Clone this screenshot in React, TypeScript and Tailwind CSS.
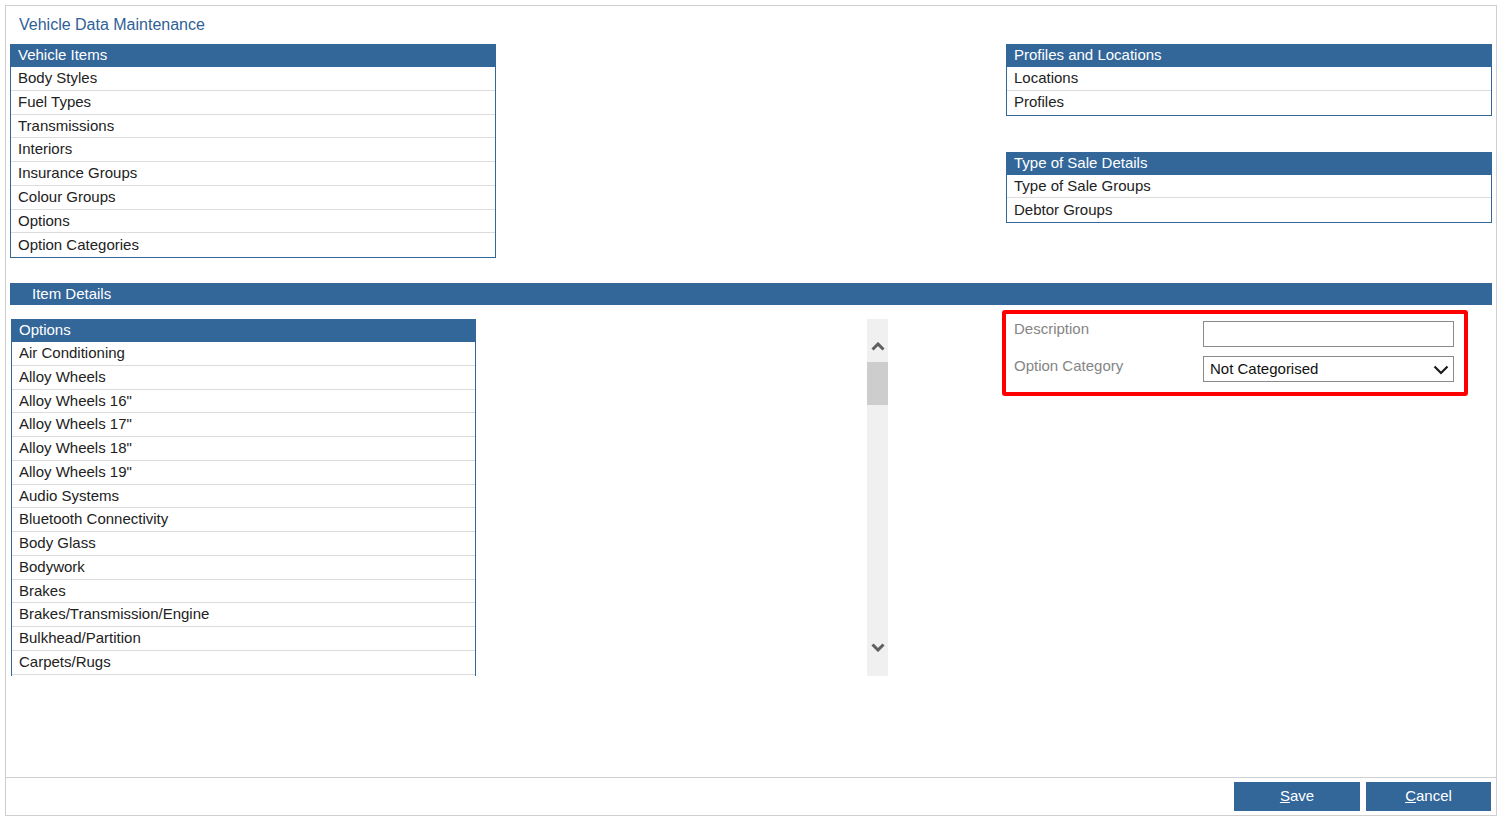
const vehicleItems = [
  'Body Styles',
  'Fuel Types',
  'Transmissions',
  'Interiors',
  'Insurance Groups',
  'Colour Groups',
  'Options',
  'Option Categories',
]

const options = [
  'Air Conditioning',
  'Alloy Wheels',
  'Alloy Wheels 16"',
  'Alloy Wheels 17"',
  'Alloy Wheels 18"',
  'Alloy Wheels 19"',
  'Audio Systems',
  'Bluetooth Connectivity',
  'Body Glass',
  'Bodywork',
  'Brakes',
  'Brakes/Transmission/Engine',
  'Bulkhead/Partition',
  'Carpets/Rugs',
]

function MenuPanel({ title, items }: { title: string; items: string[] }) {
  return (
    <div className="w-[486px] border border-[#336699] bg-white">
      <div className="flex h-[22px] items-center bg-[#336699] px-[7px] pb-[1px] text-white">{title}</div>
      {items.map((item, i) => (
        <div
          key={item}
          className={
            i === items.length - 1
              ? 'flex h-[23.75px] items-center px-[7px] text-[#222]'
              : 'flex h-[23.75px] items-center border-b border-[#dcdcdc] px-[7px] text-[#222]'
          }
        >
          {item}
        </div>
      ))}
    </div>
  )
}

function ScrollArrow({ down }: { down?: boolean }) {
  return (
    <svg width="14" height="9" viewBox="0 0 14 9">
      <polyline
        points={down ? '1.5,1.5 7,7 12.5,1.5' : '1.5,7.5 7,2 12.5,7.5'}
        fill="none"
        stroke="#5f5f5f"
        strokeWidth="3"
      />
    </svg>
  )
}

export default function App() {
  return (
    <div className="h-[820px] w-[1502px] bg-white pl-[5px] pt-[5px] text-[15px] font-['Liberation_Sans',Arial,sans-serif]">
      <div className="flex h-[811px] w-[1492px] flex-col border border-[#cfcfcf]">
        <div className="flex h-[38px] items-center pl-[13px] text-[16px] text-[#2f6196]">Vehicle Data Maintenance</div>

        <div className="flex justify-between pl-[4px] pr-[4px]">
          <MenuPanel title="Vehicle Items" items={vehicleItems} />
          <div className="flex flex-col gap-[36px]">
            <MenuPanel title="Profiles and Locations" items={['Locations', 'Profiles']} />
            <MenuPanel title="Type of Sale Details" items={['Type of Sale Groups', 'Debtor Groups']} />
          </div>
        </div>

        <div className="ml-[4px] mr-[4px] mt-[25px] flex h-[22px] items-center bg-[#336699] pl-[22px] text-white">
          Item Details
        </div>

        <div className="flex flex-1 pl-[5px] pt-[14px]">
          <div className="flex h-[357px]">
            <div className="w-[465px] overflow-hidden border-x border-t border-[#336699]">
              <div className="flex h-[22px] items-center bg-[#336699] px-[7px] pb-[1px] text-white">Options</div>
              {options.map((item) => (
                <div key={item} className="flex h-[23.75px] items-center border-b border-[#dcdcdc] px-[7px] text-[#222]">
                  {item}
                </div>
              ))}
            </div>
            <div className="ml-[391px] flex w-[21px] flex-col bg-[#f0f0f0]">
              <div className="flex h-[43px] items-end justify-center pb-[11px]">
                <ScrollArrow />
              </div>
              <div className="h-[43px] bg-[#cdcdcd]" />
              <div className="flex-1" />
              <div className="flex h-[43px] items-start justify-center pt-[10px]">
                <ScrollArrow down />
              </div>
            </div>
          </div>

          <div className="ml-[114px] mt-[-9px] h-[86px] w-[466px] rounded-[3px] border-[4px] border-[#ff0000] pl-[8px] pr-[10px] pt-[7px]">
            <div className="flex h-[35px] items-start">
              <div className="mt-[-3px] w-[189px] text-[#858585]">Description</div>
              <div className="h-[26px] w-[251px] border border-[#8a8a8a] bg-white" />
            </div>
            <div className="flex items-start">
              <div className="mt-[-1px] w-[189px] text-[#858585]">Option Category</div>
              <div className="flex h-[26px] w-[251px] items-center justify-between border border-[#8a8a8a] bg-white pl-[6px] pr-[4px] pt-[1px] text-[#111]">
                <span>Not Categorised</span>
                <svg width="16" height="10" viewBox="0 0 16 10">
                  <polyline points="1.5,1.5 8,8 14.5,1.5" fill="none" stroke="#1a1a1a" strokeWidth="2.2" />
                </svg>
              </div>
            </div>
          </div>
        </div>

        <div className="flex h-[38px] justify-end gap-[6px] border-t border-[#cfcfcf] pr-[5px] pt-[4px]">
          <button className="h-[29px] w-[126px] bg-[#336699] text-white">
            <span className="underline">S</span>ave
          </button>
          <button className="h-[29px] w-[125px] bg-[#336699] text-white">
            <span className="underline">C</span>ancel
          </button>
        </div>
      </div>
    </div>
  )
}
